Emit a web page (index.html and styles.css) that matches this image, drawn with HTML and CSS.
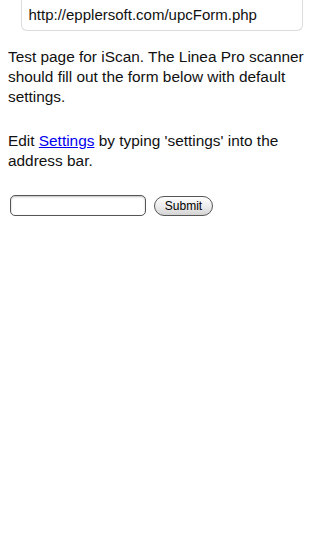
FILE: index.html
```html
<!DOCTYPE html>
<html>
<head>
<meta charset="utf-8">
<link rel="stylesheet" href="styles.css">
</head>
<body>
<div class="addr-wrap">
  <div class="addr">http://epplersoft.com/upcForm.php</div>
</div>
<main class="content">
  <p>Test page for iScan. The Linea Pro scanner should fill out the form below with default settings.</p>
  <p>Edit <a href="#">Settings</a> by typing 'settings' into the address bar.</p>
  <form class="form">
    <input class="field" type="text">
    <button class="submit" type="button">Submit</button>
  </form>
</main>
</body>
</html>
```
FILE: styles.css
```css
html, body {
  margin: 0;
  padding: 0;
  background: #fff;
}
body {
  font-family: "Liberation Sans", Arial, sans-serif;
  color: #000;
  width: 322px;
}
.addr-wrap {
  display: flex;
  justify-content: center;
  padding-left: 1px;
}
.addr {
  box-sizing: border-box;
  width: 282px;
  height: 31px;
  border: 1px solid #dcdcdc;
  border-top: none;
  border-radius: 0 0 6px 6px;
  padding: 6px 0 0 7px;
  font-size: 15px;
  line-height: 18px;
  color: #111;
}
.content {
  padding: 0 4px 0 8px;
}
.content p {
  margin: 16px 0 0;
  font-size: 15.4px;
  line-height: 20px;
  color: #111;
}
.content p + p {
  margin-top: 24px;
}
a {
  color: #0000ee;
}
.form {
  display: flex;
  align-items: center;
  gap: 8px;
  margin-top: 24px;
  padding-left: 2px;
}
.field {
  box-sizing: border-box;
  width: 136px;
  height: 21px;
  margin: 0;
  border: 1px solid #555;
  border-radius: 5px;
  background: #fff;
  box-shadow: inset 0 1px 2px rgba(0,0,0,0.25);
}
.submit {
  box-sizing: border-box;
  width: 59px;
  height: 20px;
  margin: 0;
  padding: 0;
  border: 1px solid #555;
  border-radius: 10px;
  background: linear-gradient(#fdfdfd, #ebebeb 55%, #d4d4d4);
  font-family: "Liberation Sans", Arial, sans-serif;
  font-size: 12px;
  color: #000;
}
```
